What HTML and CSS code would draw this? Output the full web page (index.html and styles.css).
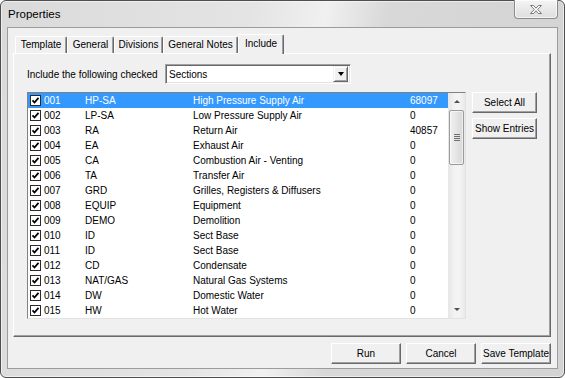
FILE: index.html
```html
<!DOCTYPE html>
<html lang="en">

<head>
    <meta charset="UTF-8">
    <meta name="viewport" content="width=device-width, initial-scale=1.0">
    <title>Properties</title>
    <link rel="stylesheet" href="styles.css">
</head>

<body>
    <div class="window">
        <div class="titlebar">
            <span class="title">Properties</span>
            <div class="close">
                <svg width="14" height="11" viewBox="0 0 14 11">
                    <path d="M1.5 1.5h3.2L7 4.2 9.3 1.5h3.2L8.7 5.5l3.8 4h-3.2L7 6.8 4.7 9.5H1.5l3.8-4z"
                        fill="#fafafa" stroke="#7a7a7a" stroke-width="1" stroke-linejoin="round" />
                </svg>
            </div>
        </div>

        <div class="client">
            <div class="tabs">
                <div class="tab w-template">Template</div>
                <div class="tab w-general">General</div>
                <div class="tab w-divisions">Divisions</div>
                <div class="tab w-notes">General Notes</div>
                <div class="tab w-include active">Include</div>
            </div>

            <div class="panel">
                <div class="filter">
                    <span class="label">Include the following checked</span>
                    <div class="combo">
                        <span class="combo-text">Sections</span>
                        <span class="drop"><i class="arrow-down"></i></span>
                    </div>
                </div>

                <div class="body">
                    <div class="list">
                        <div class="rows">
                            <div class="row sel"><span class="chk"><svg viewBox="0 0 9 9"><polyline points="1.5,4.3 3.5,6.5 7.5,1.8" /></svg></span><span class="c1">001</span><span class="c2">HP-SA</span><span class="c3">High Pressure Supply Air</span><span class="c4">68097</span></div>
                            <div class="row"><span class="chk"><svg viewBox="0 0 9 9"><polyline points="1.5,4.3 3.5,6.5 7.5,1.8" /></svg></span><span class="c1">002</span><span class="c2">LP-SA</span><span class="c3">Low Pressure Supply Air</span><span class="c4">0</span></div>
                            <div class="row"><span class="chk"><svg viewBox="0 0 9 9"><polyline points="1.5,4.3 3.5,6.5 7.5,1.8" /></svg></span><span class="c1">003</span><span class="c2">RA</span><span class="c3">Return Air</span><span class="c4">40857</span></div>
                            <div class="row"><span class="chk"><svg viewBox="0 0 9 9"><polyline points="1.5,4.3 3.5,6.5 7.5,1.8" /></svg></span><span class="c1">004</span><span class="c2">EA</span><span class="c3">Exhaust Air</span><span class="c4">0</span></div>
                            <div class="row"><span class="chk"><svg viewBox="0 0 9 9"><polyline points="1.5,4.3 3.5,6.5 7.5,1.8" /></svg></span><span class="c1">005</span><span class="c2">CA</span><span class="c3">Combustion Air - Venting</span><span class="c4">0</span></div>
                            <div class="row"><span class="chk"><svg viewBox="0 0 9 9"><polyline points="1.5,4.3 3.5,6.5 7.5,1.8" /></svg></span><span class="c1">006</span><span class="c2">TA</span><span class="c3">Transfer Air</span><span class="c4">0</span></div>
                            <div class="row"><span class="chk"><svg viewBox="0 0 9 9"><polyline points="1.5,4.3 3.5,6.5 7.5,1.8" /></svg></span><span class="c1">007</span><span class="c2">GRD</span><span class="c3">Grilles, Registers &amp; Diffusers</span><span class="c4">0</span></div>
                            <div class="row"><span class="chk"><svg viewBox="0 0 9 9"><polyline points="1.5,4.3 3.5,6.5 7.5,1.8" /></svg></span><span class="c1">008</span><span class="c2">EQUIP</span><span class="c3">Equipment</span><span class="c4">0</span></div>
                            <div class="row"><span class="chk"><svg viewBox="0 0 9 9"><polyline points="1.5,4.3 3.5,6.5 7.5,1.8" /></svg></span><span class="c1">009</span><span class="c2">DEMO</span><span class="c3">Demolition</span><span class="c4">0</span></div>
                            <div class="row"><span class="chk"><svg viewBox="0 0 9 9"><polyline points="1.5,4.3 3.5,6.5 7.5,1.8" /></svg></span><span class="c1">010</span><span class="c2">ID</span><span class="c3">Sect Base</span><span class="c4">0</span></div>
                            <div class="row"><span class="chk"><svg viewBox="0 0 9 9"><polyline points="1.5,4.3 3.5,6.5 7.5,1.8" /></svg></span><span class="c1">011</span><span class="c2">ID</span><span class="c3">Sect Base</span><span class="c4">0</span></div>
                            <div class="row"><span class="chk"><svg viewBox="0 0 9 9"><polyline points="1.5,4.3 3.5,6.5 7.5,1.8" /></svg></span><span class="c1">012</span><span class="c2">CD</span><span class="c3">Condensate</span><span class="c4">0</span></div>
                            <div class="row"><span class="chk"><svg viewBox="0 0 9 9"><polyline points="1.5,4.3 3.5,6.5 7.5,1.8" /></svg></span><span class="c1">013</span><span class="c2">NAT/GAS</span><span class="c3">Natural Gas Systems</span><span class="c4">0</span></div>
                            <div class="row"><span class="chk"><svg viewBox="0 0 9 9"><polyline points="1.5,4.3 3.5,6.5 7.5,1.8" /></svg></span><span class="c1">014</span><span class="c2">DW</span><span class="c3">Domestic Water</span><span class="c4">0</span></div>
                            <div class="row"><span class="chk"><svg viewBox="0 0 9 9"><polyline points="1.5,4.3 3.5,6.5 7.5,1.8" /></svg></span><span class="c1">015</span><span class="c2">HW</span><span class="c3">Hot Water</span><span class="c4">0</span></div>
                        </div>
                        <div class="scroll">
                            <div class="sc-btn"><i class="tri-up"></i></div>
                            <div class="thumb">
                                <div class="grip"></div>
                            </div>
                            <div class="track"></div>
                            <div class="sc-btn"><i class="tri-down"></i></div>
                        </div>
                    </div>
                    <div class="side">
                        <button class="btn side-btn">Select All</button>
                        <button class="btn side-btn">Show Entries</button>
                    </div>
                </div>
            </div>

            <div class="footer">
                <button class="btn foot-btn">Run</button>
                <button class="btn foot-btn">Cancel</button>
                <button class="btn foot-btn">Save Template</button>
            </div>
        </div>
    </div>
</body>

</html>
```

FILE: styles.css
```css
body {
    margin: 0;
    background-color: #fff;
    font-family: "Liberation Sans", Arial, sans-serif;
    font-size: 10px;
    color: #000;
}

/* window frame */
.window {
    width: 565px;
    height: 378px;
    box-sizing: border-box;
    border: 1px solid #4e4e4e;
    border-radius: 6px;
    padding: 0 6px 8px 6px;
    display: flex;
    flex-direction: column;
    background: linear-gradient(100deg, #dadada 0%, #e4e4e4 40%, #f0f0f0 52%, #d8d8d8 62%, #d3d3d3 100%);
    box-shadow: inset 0 0 0 1px rgba(255, 255, 255, 0.55);
}

.titlebar {
    height: 26px;
    display: flex;
    align-items: flex-start;
}

.title {
    font-size: 11.5px;
    margin: 7px 0 0 1px;
    color: #000;
}

.close {
    margin-left: auto;
    margin-top: -1px;
    width: 44px;
    height: 19px;
    box-sizing: border-box;
    border: 1px solid #8a8a8a;
    border-top: none;
    border-radius: 0 0 4px 4px;
    background: linear-gradient(#f4f4f4, #dedede);
    box-shadow: inset 0 0 0 1px rgba(255, 255, 255, 0.7);
    display: flex;
    align-items: center;
    justify-content: center;
}

.close svg {
    display: block;
    margin-top: 1px;
}

.client {
    flex: 1;
    border: 1px solid #9c9c9c;
    background-color: #f0f0f0;
    display: flex;
    flex-direction: column;
}

/* tabs */
.tabs {
    display: flex;
    align-items: flex-end;
    height: 19px;
    margin: 6px 0 0 7px;
}

.tab {
    height: 17px;
    line-height: 16px;
    box-sizing: border-box;
    text-align: center;
    border: 1px solid #fff;
    border-right-color: #696969;
    border-bottom: none;
    border-radius: 2px 2px 0 0;
    box-shadow: inset -1px 0 0 #a0a0a0;
    background-color: #f0f0f0;
}

.tab.active {
    height: 20px;
    line-height: 17px;
    margin-bottom: -1px;
    position: relative;
    z-index: 1;
}

.w-template { width: 52px; }
.w-general { width: 47px; }
.w-divisions { width: 49px; }
.w-notes { width: 75px; }
.w-include { width: 46px; }

.panel {
    height: 284px;
    box-sizing: border-box;
    margin: 0 6px 0 5px;
    padding: 10px 0 0 13px;
    border: 1px solid #fff;
    border-right-color: #696969;
    border-bottom-color: #696969;
    box-shadow: inset -1px -1px 0 #a0a0a0;
}

.filter {
    display: flex;
    align-items: center;
    height: 20px;
}

.label {
    width: 138px;
}

.combo {
    width: 186px;
    height: 20px;
    box-sizing: border-box;
    border: 1px solid #a0a0a0;
    border-right-color: #fff;
    border-bottom-color: #fff;
    box-shadow: inset 1px 1px 0 #696969, inset -1px -1px 0 #e3e3e3;
    background-color: #fff;
    display: flex;
    align-items: center;
    padding: 1px 2px 1px 3px;
}

.combo-text {
    flex: 1;
}

.drop {
    width: 15px;
    height: 16px;
    box-sizing: border-box;
    border: 1px solid #f0f0f0;
    border-right-color: #696969;
    border-bottom-color: #696969;
    box-shadow: inset 1px 1px 0 #fff, inset -1px -1px 0 #a0a0a0;
    background-color: #f0f0f0;
    display: flex;
    align-items: center;
    justify-content: center;
}

.arrow-down {
    width: 0;
    height: 0;
    border-left: 3.5px solid transparent;
    border-right: 3.5px solid transparent;
    border-top: 4px solid #000;
}

.body {
    display: flex;
    align-items: flex-start;
    margin-top: 8px;
}

/* list view */
.list {
    width: 439px;
    height: 227px;
    box-sizing: border-box;
    border: 1px solid #828282;
    border-right-color: #e3e3e3;
    border-bottom-color: #e3e3e3;
    background-color: #fff;
    display: flex;
}

.rows {
    width: 420px;
    overflow: hidden;
}

.row {
    height: 15px;
    line-height: 15px;
    display: flex;
    align-items: center;
    padding-left: 2px;
    white-space: nowrap;
}

.row.sel {
    background-color: #3399ff;
    color: #fff;
}

.chk {
    width: 11px;
    height: 11px;
    box-sizing: border-box;
    border: 1px solid #2a2a2a;
    background-color: #fff;
    margin-right: 3px;
    display: flex;
}

.chk svg {
    width: 9px;
    height: 9px;
}

.chk polyline {
    fill: none;
    stroke: #000;
    stroke-width: 1.8;
}

.c1 { width: 41px; }
.c2 { width: 108px; }
.c3 { width: 217px; }

.scroll {
    width: 17px;
    height: 225px;
    background: linear-gradient(to right, #e6e6e6, #f3f3f3 40%, #f3f3f3 70%, #e9e9e9);
    display: flex;
    flex-direction: column;
}

.sc-btn {
    height: 17px;
    display: flex;
    align-items: center;
    justify-content: center;
}

.tri-up,
.tri-down {
    width: 0;
    height: 0;
    border-left: 3px solid transparent;
    border-right: 3px solid transparent;
}

.tri-up {
    border-bottom: 3px solid #4f4f4f;
}

.tri-down {
    border-top: 3px solid #4f4f4f;
}

.thumb {
    height: 55px;
    margin: 0 1px;
    box-sizing: border-box;
    border: 1px solid #9a9a9a;
    border-radius: 2px;
    background: linear-gradient(to right, #f1f1f1, #e4e4e4 50%, #d8d8d8);
    box-shadow: inset 0 0 0 1px rgba(255, 255, 255, 0.6);
    display: flex;
    align-items: center;
    justify-content: center;
}

.grip {
    width: 6px;
    height: 7px;
    background: repeating-linear-gradient(#6f6f6f 0, #6f6f6f 1px, transparent 1px, transparent 2px);
}

.track {
    flex: 1;
}

/* buttons */
.btn {
    font-family: inherit;
    font-size: inherit;
    color: #000;
    background-color: #f0f0f0;
    border: 1px solid #fff;
    border-right-color: #696969;
    border-bottom-color: #696969;
    box-shadow: inset -1px -1px 0 #a0a0a0;
    padding: 0;
    margin: 0;
    height: 21px;
}

.side {
    display: flex;
    flex-direction: column;
    gap: 5px;
    margin-left: 6px;
}

.side-btn {
    width: 65px;
}

.footer {
    display: flex;
    justify-content: flex-end;
    gap: 5px;
    margin: 6px 6px 0 0;
}

.foot-btn {
    width: 70px;
}
```
